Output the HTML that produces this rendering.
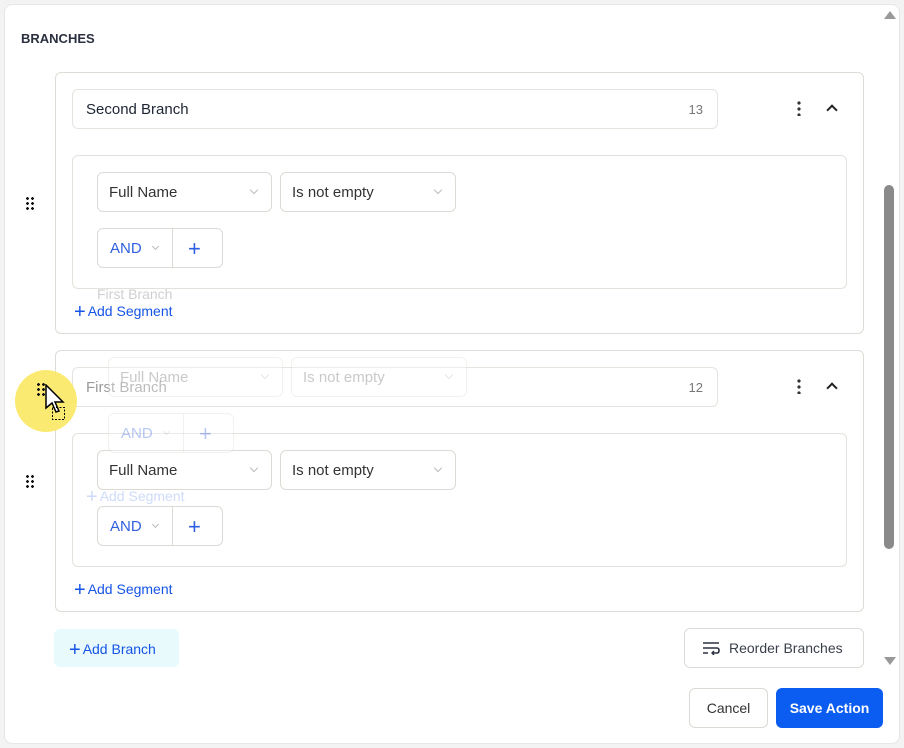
<!DOCTYPE html>
<html><head><style>
body{margin:0;width:904px;height:748px;background:#f3f3f3;font-family:"Liberation Sans",sans-serif;position:relative;overflow:hidden}
.a{position:absolute;box-sizing:border-box}
.panel{left:4px;top:4px;width:896px;height:740px;background:#fff;border:1px solid #e6e6e6;border-radius:8px}
.card{border:1px solid #dedcd6;border-radius:6px;background:#fff}
.inp{border:1px solid #e6e4df;border-radius:6px;background:#fff;font-size:15px;color:#1d2433;padding-left:13px;line-height:39px}
.sel{border:1px solid #dcdad5;border-radius:6px;background:#fff;font-size:15px;color:#333;padding-left:11px;line-height:39px}
.sel:after{content:"";position:absolute;right:14px;top:14px;width:5px;height:5px;border-right:1px solid #bbb;border-bottom:1px solid #bbb;transform:rotate(45deg)}
.and{border:1px solid #dcdad5;border-radius:6px;background:#fff;font-size:15px;color:#2f5fe0;line-height:39px}
.and i{position:absolute;left:55px;top:15px;width:4px;height:4px;border-right:1px solid #bbb;border-bottom:1px solid #bbb;transform:rotate(45deg)}
.blue{color:#1554e6;font-size:14px}
.dots{width:10px;height:14px;background-image:radial-gradient(circle,#111 1.3px,transparent 1.5px);background-size:5px 5px}
.kebab{width:4px;height:16px;background-image:radial-gradient(circle,#333 1.6px,transparent 1.8px);background-size:4px 6px}
.chev{width:8px;height:8px;border-left:2px solid #222;border-top:2px solid #222;transform:rotate(45deg)}
.ghost{opacity:.35}
</style></head><body>
<div class="a panel"></div>
<div class="a" style="left:21px;top:31px;font-size:13px;font-weight:bold;color:#2b3040">BRANCHES</div>
<div class="a" style="left:884px;top:11px;width:0;height:0;border-left:6px solid transparent;border-right:6px solid transparent;border-bottom:8px solid #999"></div>
<div class="a" style="left:884px;top:185px;width:10px;height:364px;background:#8a8a8a;border-radius:5px"></div>
<div class="a" style="left:884px;top:657px;width:0;height:0;border-left:6px solid transparent;border-right:6px solid transparent;border-top:8px solid #999"></div>

<div class="a card" style="left:55px;top:72px;width:809px;height:262px"></div>
<div class="a inp" style="left:72px;top:89px;width:646px;height:40px">Second Branch<span style="position:absolute;right:14px;font-size:13px;color:#777">13</span></div>
<div class="a kebab" style="left:797px;top:100px"></div>
<div class="a chev" style="left:828px;top:106px"></div>
<div class="a dots" style="left:25px;top:196px"></div>
<div class="a card" style="left:72px;top:155px;width:775px;height:134px;border-color:#e3e1dc"></div>
<div class="a sel" style="left:97px;top:172px;width:175px;height:40px">Full Name</div>
<div class="a sel" style="left:280px;top:172px;width:176px;height:40px">Is not empty</div>
<div class="a and" style="left:97px;top:228px;width:126px;height:40px"><span style="position:absolute;left:12px">AND</span><i></i><span style="position:absolute;left:74px;top:0;bottom:0;border-left:1px solid #dcdad5"></span><span style="position:absolute;left:90px;font-size:22px;color:#2f5fe0">+</span></div>
<div class="a blue" style="left:74px;top:299px"><span style="font-size:20px;position:relative;top:2px;margin-right:2px">+</span>Add Segment</div>

<div class="a card" style="left:55px;top:350px;width:809px;height:262px"></div>
<div class="a inp" style="left:72px;top:367px;width:646px;height:40px;color:#999">First Branch<span style="position:absolute;right:14px;font-size:13px;color:#777">12</span></div>
<div class="a kebab" style="left:797px;top:378px"></div>
<div class="a chev" style="left:828px;top:384px"></div>
<div class="a dots" style="left:25px;top:474px"></div>
<div class="a card" style="left:72px;top:433px;width:775px;height:134px;border-color:#e3e1dc"></div>
<div class="a sel" style="left:97px;top:450px;width:175px;height:40px">Full Name</div>
<div class="a sel" style="left:280px;top:450px;width:176px;height:40px">Is not empty</div>
<div class="a and" style="left:97px;top:506px;width:126px;height:40px"><span style="position:absolute;left:12px">AND</span><i></i><span style="position:absolute;left:74px;top:0;bottom:0;border-left:1px solid #dcdad5"></span><span style="position:absolute;left:90px;font-size:22px;color:#2f5fe0">+</span></div>
<div class="a blue" style="left:74px;top:577px"><span style="font-size:20px;position:relative;top:2px;margin-right:2px">+</span>Add Segment</div>

<div class="ghost">
<div class="a" style="left:97px;top:286px;font-size:14px;color:#777">First Branch</div>
<div class="a sel" style="left:108px;top:357px;width:175px;height:40px;color:#666">Full Name</div>
<div class="a sel" style="left:291px;top:357px;width:176px;height:40px;color:#666">Is not empty</div>
<div class="a and" style="left:108px;top:413px;width:126px;height:40px"><span style="position:absolute;left:12px">AND</span><i></i><span style="position:absolute;left:74px;top:0;bottom:0;border-left:1px solid #dcdad5"></span><span style="position:absolute;left:90px;font-size:22px">+</span></div>
<div class="a blue" style="left:86px;top:484px;opacity:.6"><span style="font-size:20px;position:relative;top:2px;margin-right:2px">+</span>Add Segment</div>
</div>

<div class="a" style="left:15px;top:370px;width:62px;height:62px;border-radius:50%;background:#fbe96a;opacity:.95"></div>
<div class="a dots" style="left:36px;top:382px"></div>
<svg class="a" style="left:44px;top:384px" width="30" height="42"><path d="M2 1 L2 24 L8 19 L12 28 L15 27 L11 18 L19 18 Z" fill="#fff" stroke="#000" stroke-width="1.5"/><rect x="8.5" y="23.5" width="12" height="12" fill="none" stroke="#000" stroke-dasharray="2 1.5"/></svg>

<div class="a" style="left:54px;top:629px;width:125px;height:38px;background:#e8fafc;border-radius:6px;font-size:14px;color:#1554e6;line-height:38px;padding-left:15px"><span style="font-size:20px;position:relative;top:2px;margin-right:2px">+</span>Add Branch</div>
<div class="a" style="left:684px;top:628px;width:180px;height:40px;border:1px solid #dcdad5;border-radius:6px;font-size:14px;color:#3a3f4b;line-height:38px;padding-left:44px">Reorder Branches
<svg style="position:absolute;left:17px;top:12px" width="18" height="14"><path d="M1 2H17M1 7H15q2 0 2 2.5T15 12H10M1 12H6" stroke="#2b3040" stroke-width="1.6" fill="none"/><path d="M12 10l-2 2 2 2" stroke="#2b3040" stroke-width="1.4" fill="none"/></svg></div>
<div class="a" style="left:689px;top:688px;width:79px;height:40px;border:1px solid #dcdad5;border-radius:6px;font-size:14px;color:#333;line-height:38px;text-align:center">Cancel</div>
<div class="a" style="left:776px;top:688px;width:107px;height:40px;background:#0b5cf0;border-radius:6px;font-size:14px;font-weight:bold;color:#fff;line-height:40px;text-align:center">Save Action</div>
</body></html>
